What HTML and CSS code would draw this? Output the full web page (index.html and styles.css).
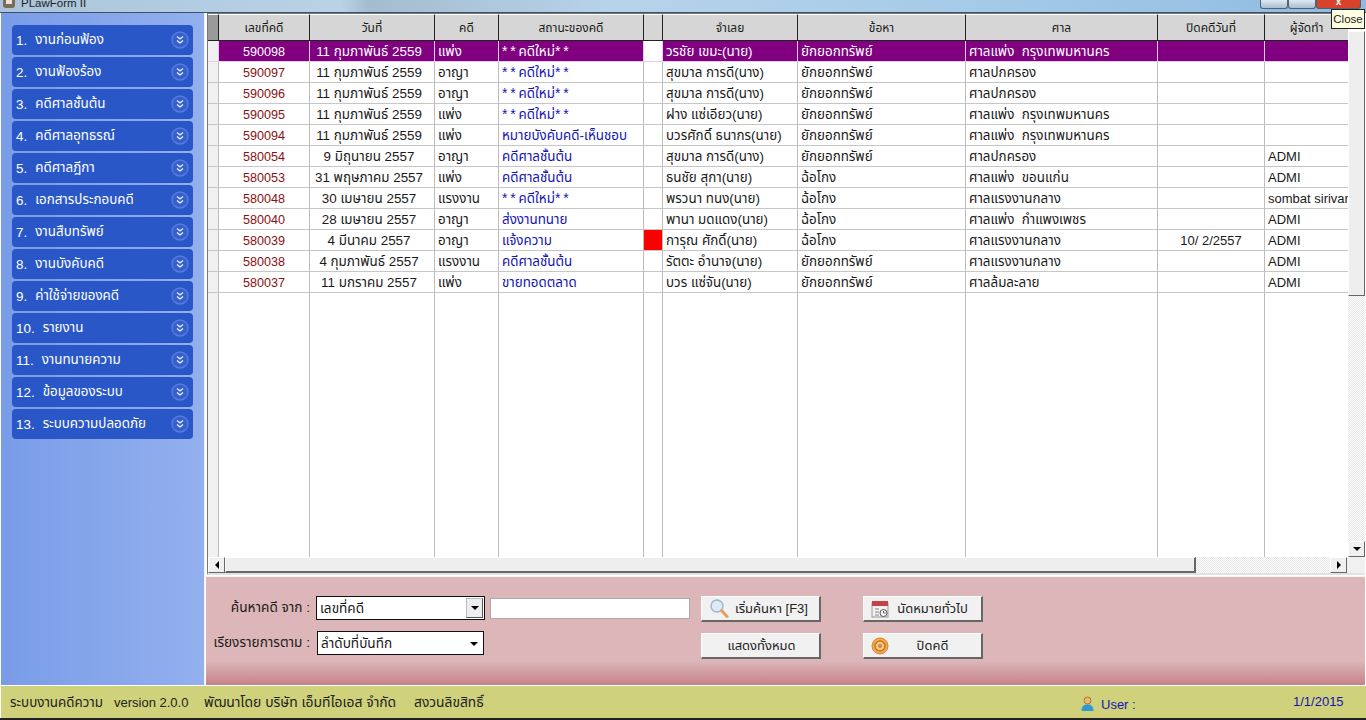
FILE: index.html
```html
<!DOCTYPE html>
<html lang="th">
<head>
<meta charset="utf-8">
<title>PLawForm II</title>
<link rel="stylesheet" href="styles.css">
</head>
<body>
<div class="app">
  <header class="titlebar">
    <div class="title">
      <svg class="appicon" width="14" height="12" viewBox="0 0 14 12"><rect x="1" y="-4" width="12" height="12" rx="3" fill="#7c6a52"/><rect x="4" y="-4" width="6" height="8" fill="#e9e4d8"/></svg>
      <span>PLawForm II</span>
    </div>
    <div class="winbtns">
      <span class="winbtn"></span><span class="winbtn"></span><span class="winbtn close">x</span>
    </div>
  </header>
  <div class="tooltip">Close</div>
  <div class="workspace">
    <nav class="sidebar">
      <a class="menu"><span class="num">1.</span><span class="lbl">งานก่อนฟ้อง</span><svg class="chev" viewBox="0 0 18 18"><circle cx="9" cy="9" r="8" fill="#3560cf" stroke="#587cdc" stroke-width="1.5"/><path d="M6 5.500l3 2.500 3-2.500M6 9.500l3 2.500 3-2.500" fill="none" stroke="#eef2fb" stroke-width="1.300"/></svg></a>
      <a class="menu"><span class="num">2.</span><span class="lbl">งานฟ้องร้อง</span><svg class="chev" viewBox="0 0 18 18"><circle cx="9" cy="9" r="8" fill="#3560cf" stroke="#587cdc" stroke-width="1.5"/><path d="M6 5.500l3 2.500 3-2.500M6 9.500l3 2.500 3-2.500" fill="none" stroke="#eef2fb" stroke-width="1.300"/></svg></a>
      <a class="menu"><span class="num">3.</span><span class="lbl">คดีศาลชั้นต้น</span><svg class="chev" viewBox="0 0 18 18"><circle cx="9" cy="9" r="8" fill="#3560cf" stroke="#587cdc" stroke-width="1.5"/><path d="M6 5.500l3 2.500 3-2.500M6 9.500l3 2.500 3-2.500" fill="none" stroke="#eef2fb" stroke-width="1.300"/></svg></a>
      <a class="menu"><span class="num">4.</span><span class="lbl">คดีศาลอุทธรณ์</span><svg class="chev" viewBox="0 0 18 18"><circle cx="9" cy="9" r="8" fill="#3560cf" stroke="#587cdc" stroke-width="1.5"/><path d="M6 5.500l3 2.500 3-2.500M6 9.500l3 2.500 3-2.500" fill="none" stroke="#eef2fb" stroke-width="1.300"/></svg></a>
      <a class="menu"><span class="num">5.</span><span class="lbl">คดีศาลฎีกา</span><svg class="chev" viewBox="0 0 18 18"><circle cx="9" cy="9" r="8" fill="#3560cf" stroke="#587cdc" stroke-width="1.5"/><path d="M6 5.500l3 2.500 3-2.500M6 9.500l3 2.500 3-2.500" fill="none" stroke="#eef2fb" stroke-width="1.300"/></svg></a>
      <a class="menu"><span class="num">6.</span><span class="lbl">เอกสารประกอบคดี</span><svg class="chev" viewBox="0 0 18 18"><circle cx="9" cy="9" r="8" fill="#3560cf" stroke="#587cdc" stroke-width="1.5"/><path d="M6 5.500l3 2.500 3-2.500M6 9.500l3 2.500 3-2.500" fill="none" stroke="#eef2fb" stroke-width="1.300"/></svg></a>
      <a class="menu"><span class="num">7.</span><span class="lbl">งานสืบทรัพย์</span><svg class="chev" viewBox="0 0 18 18"><circle cx="9" cy="9" r="8" fill="#3560cf" stroke="#587cdc" stroke-width="1.5"/><path d="M6 5.500l3 2.500 3-2.500M6 9.500l3 2.500 3-2.500" fill="none" stroke="#eef2fb" stroke-width="1.300"/></svg></a>
      <a class="menu"><span class="num">8.</span><span class="lbl">งานบังคับคดี</span><svg class="chev" viewBox="0 0 18 18"><circle cx="9" cy="9" r="8" fill="#3560cf" stroke="#587cdc" stroke-width="1.5"/><path d="M6 5.500l3 2.500 3-2.500M6 9.500l3 2.500 3-2.500" fill="none" stroke="#eef2fb" stroke-width="1.300"/></svg></a>
      <a class="menu"><span class="num">9.</span><span class="lbl">ค่าใช้จ่ายของคดี</span><svg class="chev" viewBox="0 0 18 18"><circle cx="9" cy="9" r="8" fill="#3560cf" stroke="#587cdc" stroke-width="1.5"/><path d="M6 5.500l3 2.500 3-2.500M6 9.500l3 2.500 3-2.500" fill="none" stroke="#eef2fb" stroke-width="1.300"/></svg></a>
      <a class="menu"><span class="num">10.</span><span class="lbl">รายงาน</span><svg class="chev" viewBox="0 0 18 18"><circle cx="9" cy="9" r="8" fill="#3560cf" stroke="#587cdc" stroke-width="1.5"/><path d="M6 5.500l3 2.500 3-2.500M6 9.500l3 2.500 3-2.500" fill="none" stroke="#eef2fb" stroke-width="1.300"/></svg></a>
      <a class="menu"><span class="num">11.</span><span class="lbl">งานทนายความ</span><svg class="chev" viewBox="0 0 18 18"><circle cx="9" cy="9" r="8" fill="#3560cf" stroke="#587cdc" stroke-width="1.5"/><path d="M6 5.500l3 2.500 3-2.500M6 9.500l3 2.500 3-2.500" fill="none" stroke="#eef2fb" stroke-width="1.300"/></svg></a>
      <a class="menu"><span class="num">12.</span><span class="lbl">ข้อมูลของระบบ</span><svg class="chev" viewBox="0 0 18 18"><circle cx="9" cy="9" r="8" fill="#3560cf" stroke="#587cdc" stroke-width="1.5"/><path d="M6 5.500l3 2.500 3-2.500M6 9.500l3 2.500 3-2.500" fill="none" stroke="#eef2fb" stroke-width="1.300"/></svg></a>
      <a class="menu"><span class="num">13.</span><span class="lbl">ระบบความปลอดภัย</span><svg class="chev" viewBox="0 0 18 18"><circle cx="9" cy="9" r="8" fill="#3560cf" stroke="#587cdc" stroke-width="1.5"/><path d="M6 5.500l3 2.500 3-2.500M6 9.500l3 2.500 3-2.500" fill="none" stroke="#eef2fb" stroke-width="1.300"/></svg></a>
    </nav>
    <main class="main">
      <section class="gridwrap">
        <div class="gridrow">
          <div class="gridclip">
            <table class="grid">
              <colgroup>
                <col class="c-ind"><col class="c-no"><col class="c-date"><col class="c-type"><col class="c-status"><col class="c-flag"><col class="c-def"><col class="c-charge"><col class="c-court"><col class="c-closed"><col class="c-owner">
              </colgroup>
              <thead>
                <tr><th class="ind"></th><th>เลขที่คดี</th><th>วันที่</th><th>คดี</th><th>สถานะของคดี</th><th></th><th>จำเลย</th><th>ข้อหา</th><th>ศาล</th><th>ปิดคดีวันที่</th><th>ผู้จัดทำ</th></tr>
              </thead>
              <tbody>
                <tr class="sel"><td class="ind"></td><td class="no">590098</td><td class="date">11 กุมภาพันธ์ 2559</td><td>แพ่ง</td><td class="st"><span class="star">**</span>คดีใหม่<span class="star">**</span></td><td class="flag"></td><td>วรชัย เขมะ(นาย)</td><td>ยักยอกทรัพย์</td><td>ศาลแพ่ง &nbsp;กรุงเทพมหานคร</td><td></td><td></td></tr>
                <tr><td class="ind"></td><td class="no">590097</td><td class="date">11 กุมภาพันธ์ 2559</td><td>อาญา</td><td class="st"><span class="star">**</span>คดีใหม่<span class="star">**</span></td><td class="flag"></td><td>สุขมาล การดี(นาง)</td><td>ยักยอกทรัพย์</td><td>ศาลปกครอง</td><td></td><td></td></tr>
                <tr><td class="ind"></td><td class="no">590096</td><td class="date">11 กุมภาพันธ์ 2559</td><td>อาญา</td><td class="st"><span class="star">**</span>คดีใหม่<span class="star">**</span></td><td class="flag"></td><td>สุขมาล การดี(นาง)</td><td>ยักยอกทรัพย์</td><td>ศาลปกครอง</td><td></td><td></td></tr>
                <tr><td class="ind"></td><td class="no">590095</td><td class="date">11 กุมภาพันธ์ 2559</td><td>แพ่ง</td><td class="st"><span class="star">**</span>คดีใหม่<span class="star">**</span></td><td class="flag"></td><td>ฝาง แซ่เอียว(นาย)</td><td>ยักยอกทรัพย์</td><td>ศาลแพ่ง &nbsp;กรุงเทพมหานคร</td><td></td><td></td></tr>
                <tr><td class="ind"></td><td class="no">590094</td><td class="date">11 กุมภาพันธ์ 2559</td><td>แพ่ง</td><td class="st">หมายบังคับคดี-เห็นชอบ</td><td class="flag"></td><td>บวรศักดิ์ ธนากร(นาย)</td><td>ยักยอกทรัพย์</td><td>ศาลแพ่ง &nbsp;กรุงเทพมหานคร</td><td></td><td></td></tr>
                <tr><td class="ind"></td><td class="no">580054</td><td class="date">9 มิถุนายน 2557</td><td>อาญา</td><td class="st">คดีศาลชั้นต้น</td><td class="flag"></td><td>สุขมาล การดี(นาง)</td><td>ยักยอกทรัพย์</td><td>ศาลปกครอง</td><td></td><td>ADMI</td></tr>
                <tr><td class="ind"></td><td class="no">580053</td><td class="date">31 พฤษภาคม 2557</td><td>แพ่ง</td><td class="st">คดีศาลชั้นต้น</td><td class="flag"></td><td>ธนชัย สุกา(นาย)</td><td>ฉ้อโกง</td><td>ศาลแพ่ง &nbsp;ขอนแก่น</td><td></td><td>ADMI</td></tr>
                <tr><td class="ind"></td><td class="no">580048</td><td class="date">30 เมษายน 2557</td><td>แรงงาน</td><td class="st"><span class="star">**</span>คดีใหม่<span class="star">**</span></td><td class="flag"></td><td>พรวนา ทนง(นาย)</td><td>ฉ้อโกง</td><td>ศาลแรงงานกลาง</td><td></td><td>sombat sirivan</td></tr>
                <tr><td class="ind"></td><td class="no">580040</td><td class="date">28 เมษายน 2557</td><td>อาญา</td><td class="st">ส่งงานทนาย</td><td class="flag"></td><td>พานา มดแดง(นาย)</td><td>ฉ้อโกง</td><td>ศาลแพ่ง &nbsp;กำแพงเพชร</td><td></td><td>ADMI</td></tr>
                <tr><td class="ind"></td><td class="no">580039</td><td class="date">4 มีนาคม 2557</td><td>อาญา</td><td class="st">แจ้งความ</td><td class="flag red"></td><td>การุณ ศักดิ์(นาย)</td><td>ฉ้อโกง</td><td>ศาลแรงงานกลาง</td><td class="closed">10/ 2/2557</td><td>ADMI</td></tr>
                <tr><td class="ind"></td><td class="no">580038</td><td class="date">4 กุมภาพันธ์ 2557</td><td>แรงงาน</td><td class="st">คดีศาลชั้นต้น</td><td class="flag"></td><td>รัตตะ อำนาจ(นาย)</td><td>ยักยอกทรัพย์</td><td>ศาลแรงงานกลาง</td><td></td><td>ADMI</td></tr>
                <tr><td class="ind"></td><td class="no">580037</td><td class="date">11 มกราคม 2557</td><td>แพ่ง</td><td class="st">ขายทอดตลาด</td><td class="flag"></td><td>บวร แซ่จัน(นาย)</td><td>ยักยอกทรัพย์</td><td>ศาลล้มละลาย</td><td></td><td>ADMI</td></tr>
                <tr class="fill"><td class="ind"></td><td></td><td></td><td></td><td></td><td class="flag"></td><td></td><td></td><td></td><td></td><td></td></tr>
              </tbody>
            </table>
          </div>
          <div class="vscroll">
            <div class="vthumb"></div>
            <div class="sbtrack"></div>
            <div class="sbbtn"><i class="arrow down"></i></div>
          </div>
        </div>
        <div class="hscroll">
          <div class="sbbtn"><i class="arrow left"></i></div>
          <div class="hthumb"></div>
          <div class="sbtrack"></div>
          <div class="sbbtn"><i class="arrow right"></i></div>
          <div class="corner"></div>
        </div>
      </section>
      <section class="panel">
        <div class="fields">
          <div class="field">
            <label class="flabel">ค้นหาคดี จาก :</label>
            <div class="combo"><span>เลขที่คดี</span><span class="dropbtn"><i class="arrow down"></i></span></div>
            <div class="textbox"></div>
          </div>
          <div class="field">
            <label class="flabel">เรียงรายการตาม :</label>
            <div class="combo flat"><span>ลำดับที่บันทึก</span><i class="arrow down"></i></div>
          </div>
        </div>
        <div class="btncol first">
          <button class="btn"><svg class="bicon" width="20" height="20" viewBox="0 0 20 20"><circle cx="8" cy="7" r="6" fill="#dcebf7" stroke="#9fb8cc" stroke-width="1.500"/><path d="M12.500 11.500l5.500 6" stroke="#e0a060" stroke-width="3" stroke-linecap="round"/></svg><span class="blabel">เริ่มค้นหา [F3]</span></button>
          <button class="btn"><span class="blabel">แสดงทั้งหมด</span></button>
        </div>
        <div class="btncol">
          <button class="btn"><svg class="bicon" width="18" height="18" viewBox="0 0 18 18"><rect x="1" y="3" width="16" height="14" fill="#f1f1ef" stroke="#999"/><rect x="1" y="1" width="16" height="5" fill="#c8404a"/><path d="M4 9h4M4 12h4M4 15h4" stroke="#888"/><circle cx="12.500" cy="13" r="3.500" fill="#fff" stroke="#555"/><path d="M12.500 11v2h2" stroke="#555" fill="none"/></svg><span class="blabel">นัดหมายทั่วไป</span></button>
          <button class="btn"><svg class="bicon" width="18" height="18" viewBox="0 0 18 18"><circle cx="9" cy="9" r="8" fill="#f2a955" stroke="#d9862c"/><circle cx="9" cy="9" r="5" fill="#f6c88a" stroke="#c9761f" stroke-width="1.500"/><circle cx="9" cy="9" r="2" fill="#d9862c"/></svg><span class="blabel">ปิดคดี</span></button>
        </div>
      </section>
    </main>
  </div>
  <footer class="status">
    <div class="stleft"><span class="s1">ระบบงานคดีความ</span><span class="s2">version 2.0.0</span><span class="s3">พัฒนาโดย บริษัท เอ็มทีไอเอส จำกัด</span><span class="s4">สงวนลิขสิทธิ์</span></div>
    <div class="user"><svg width="15" height="16" viewBox="0 0 15 16"><circle cx="7.500" cy="4.500" r="3.500" fill="#e8b878" stroke="#a87830"/><path d="M1.500 15c0-5 2.500-6.500 6-6.500s6 1.500 6 6.500z" fill="#2f9ad0"/></svg><span>User :</span></div>
    <div class="today">1/1/2015</div>
  </footer>
  <div class="blackline"></div>
</div>
</body>
</html>
```
FILE: styles.css
```css
* { box-sizing: border-box; }
html, body { margin: 0; padding: 0; height: 100%; overflow: hidden; }
body { font-family: "Liberation Sans", "Noto Sans", "Noto Sans Thai", sans-serif; font-size: 13px; color: #1a1a1a; background: #fff; }
.app { width: 1366px; height: 720px; display: flex; flex-direction: column; position: relative; }

.titlebar { height: 13px; flex: none; display: flex; justify-content: space-between; overflow: hidden;
  background: linear-gradient(90deg, #a9c4da, #b9d2e6 25%, #a4bccf 27%, #b7d3ea 45%, #a6cbe8 70%, #8fbbe0); border-bottom: 1px solid #3d5266; }
.title { display: flex; align-items: flex-start; gap: 5px; padding-left: 2px; font-size: 11.5px; line-height: 12px; color: #222; margin-top: -3px; }
.appicon { flex: none; margin-top: 3px; }
.winbtns { display: flex; margin-right: 5px; }
.winbtn { width: 28px; height: 9px; border: 1px solid #4d6478; border-top: 0; border-radius: 0 0 3px 3px; background: linear-gradient(#dfe9f2, #a9bccd); }
.winbtn.close { width: 45px; background: #d8412a; color: #fff; font-size: 10px; line-height: 4px; text-align: center; font-weight: bold; }
.tooltip { position: absolute; left: 1331px; top: 9px; width: 34px; height: 20px; background: #ffffe1; border: 1px solid #222; font-size: 11.5px; line-height: 18px; text-align: center; color: #222; z-index: 2; }

.workspace { height: 673px; flex: none; display: flex; background: #fff; padding-bottom: 1px; }
.sidebar { width: 204px; flex: none; margin-left: 1px; border-right: 1px solid #f4f4f4; padding: 12px 11px 0 11px; display: flex; flex-direction: column; gap: 2px;
  background: linear-gradient(90deg, #7a9ce8, #93b0ee); }
.menu { height: 30px; display: flex; align-items: center; padding: 0 4px; background: #2a57c8; border-radius: 4px; color: #fff; font-size: 13.4px; }
.num { margin-right: 8px; }
.lbl { flex: 1; white-space: nowrap; }
.chev { width: 18px; height: 18px; flex: none; }

.main { flex: 1; display: flex; flex-direction: column; min-width: 0; padding-left: 2px; }
.gridwrap { height: 562px; flex: none; background: #fff; border-bottom: 2px solid #e2e2e2; display: flex; flex-direction: column; border-left: 1px solid #777; border-top: 1px solid #777; margin-right: 1px; }
.gridrow { flex: 1; display: flex; min-height: 0; }
.gridclip { flex: 1; overflow: hidden; min-width: 0; }
.grid { border-collapse: separate; border-spacing: 0; table-layout: fixed; width: 1141px; height: 543px; }
.c-ind { width: 11px; } .c-no { width: 91px; } .c-date { width: 125px; } .c-type { width: 64px; } .c-status { width: 145px; }
.c-flag { width: 19px; } .c-def { width: 135px; } .c-charge { width: 168px; } .c-court { width: 192px; } .c-closed { width: 107px; } .c-owner { width: 84px; }
.grid th { height: 27px; background: #d6d6d6; border-right: 1px solid #222; border-bottom: 1px solid #222; border-top: 1px solid #fff; font-weight: normal; font-size: 12px; text-align: center; padding: 0; white-space: nowrap; overflow: hidden; }
.grid th.ind { background: #9a9a9a; }
.grid td { height: 21px; padding: 1px 3px 0; border-right: 1px solid #bdbdbd; border-bottom: 1px solid #c6c6c6; white-space: nowrap; overflow: hidden; background: #fff; color: #1a1a1a; font-size: 13.4px; line-height: 18px; }
.grid td:last-child { font-size: 13px; }
.grid td.ind { background: #f0f0f0; }
.grid td.no { color: #8b1010; text-align: center; font-size: 12.6px; }
.grid td.date { text-align: center; padding-right: 9px; }
.grid td.st { color: #1414b4; }
.star { font-size: 14px; letter-spacing: 2.800px; }
.grid td.closed { text-align: center; font-size: 13px; }
.grid td.red { background: #fa0000; }
.grid tr.sel td { background: #800080; color: #fff; border-right-color: #e6cce6; border-bottom-color: #e6cce6; }
.grid tr.sel td.ind { background: #f0f0f0; }
.grid tr.sel td.flag { background: #fff; }
.grid tr.sel td.st { color: #fff; }
.grid tr.sel td.no { color: #fff; }
.grid tr.fill td { height: auto; border-bottom: 0; }

.vscroll { width: 17px; flex: none; display: flex; flex-direction: column; padding-top: 17px; background: #fff; }
.vthumb { height: 265px; background: #eee; border: 1px solid #fff; border-right-color: #666; border-bottom-color: #666; flex: none; }
.sbtrack { flex: 1; background: repeating-conic-gradient(#e6e6e6 0 25%, #fff 0 50%) 0 0 / 2px 2px; }
.sbbtn { width: 17px; height: 16px; flex: none; background: #f0f0f0; border: 1px solid #fff; border-right-color: #666; border-bottom-color: #666; display: flex; align-items: center; justify-content: center; }
.hscroll { height: 16px; flex: none; display: flex; }
.hthumb { width: 971px; flex: none; background: #eee; border: 1px solid #fff; border-right: 2px solid #666; border-bottom: 2px solid #666; }
.corner { width: 18px; flex: none; background: #f0f0f0; }
.arrow { display: block; width: 0; height: 0; border: 4px solid transparent; }
.arrow.down { border-top: 4px solid #000; border-bottom: 0; }
.arrow.left { border-right: 4px solid #000; border-left: 0; }
.arrow.right { border-left: 4px solid #000; border-right: 0; }

.panel { flex: 1; min-height: 0; display: flex; padding: 19px 0 0 0; margin-right: 1px; margin-top: 1px; margin-left: -1px; border-top: 1px solid #f4f4f4;
  background: linear-gradient(180deg, #dcb6b8 0, #dcb6b8 78%, #c58288 100%); }
.fields { width: 485px; flex: none; display: flex; flex-direction: column; gap: 11px; }
.field { display: flex; align-items: center; height: 24px; }
.flabel { width: 104px; flex: none; text-align: right; margin-right: 6px; font-size: 13.6px; white-space: nowrap; }
.combo { width: 169px; height: 24px; flex: none; background: #fff; border: 1px solid #111; display: flex; align-items: center; justify-content: space-between; padding: 1px 1px 0 3px; font-size: 13.6px; }
.combo.flat { width: 167px; margin-left: 1px; padding-right: 5px; }
.dropbtn { width: 17px; height: 20px; margin-top: -1px; background: #eee; border: 1px solid #bbb; border-right-color: #555; border-bottom-color: #555; display: flex; align-items: center; justify-content: center; }
.textbox { width: 200px; height: 21px; flex: none; margin-left: 5px; background: #fff; border: 1px solid #aaa; }
.btncol { display: flex; flex-direction: column; gap: 11px; width: 120px; flex: none; margin-left: 42px; }
.btncol.first { margin-left: 10px; }
.btn { width: 120px; height: 26px; flex: none; display: flex; align-items: center; padding: 0 5px 0 7px; background: #f1f1f1; border: 1px solid #fff; border-right: 2px solid #666; border-bottom: 2px solid #666; font: inherit; font-size: 13px; color: #222; }
.blabel { flex: 1; text-align: center; white-space: nowrap; }
.bicon { flex: none; }

.status { height: 32px; flex: none; margin-left: 1px; display: flex; align-items: flex-start; padding-top: 6px; background: #cfd27a; font-size: 13px; }
.stleft { display: flex; align-items: baseline; padding-left: 9px; color: #222; width: 1079px; flex: none; }
.s1 { width: 104px; font-size: 13.4px; white-space: nowrap; }
.s2 { width: 90px; white-space: nowrap; }
.s3 { width: 210px; font-size: 13.900px; white-space: nowrap; }
.s4 { font-size: 13.800px; white-space: nowrap; }
.user { display: flex; align-items: center; gap: 6px; width: 213px; flex: none; margin-top: 4px; color: #1414b4; }
.today { color: #1414b4; margin-top: 2px; }
.blackline { height: 2px; flex: none; background: #222; }
```
